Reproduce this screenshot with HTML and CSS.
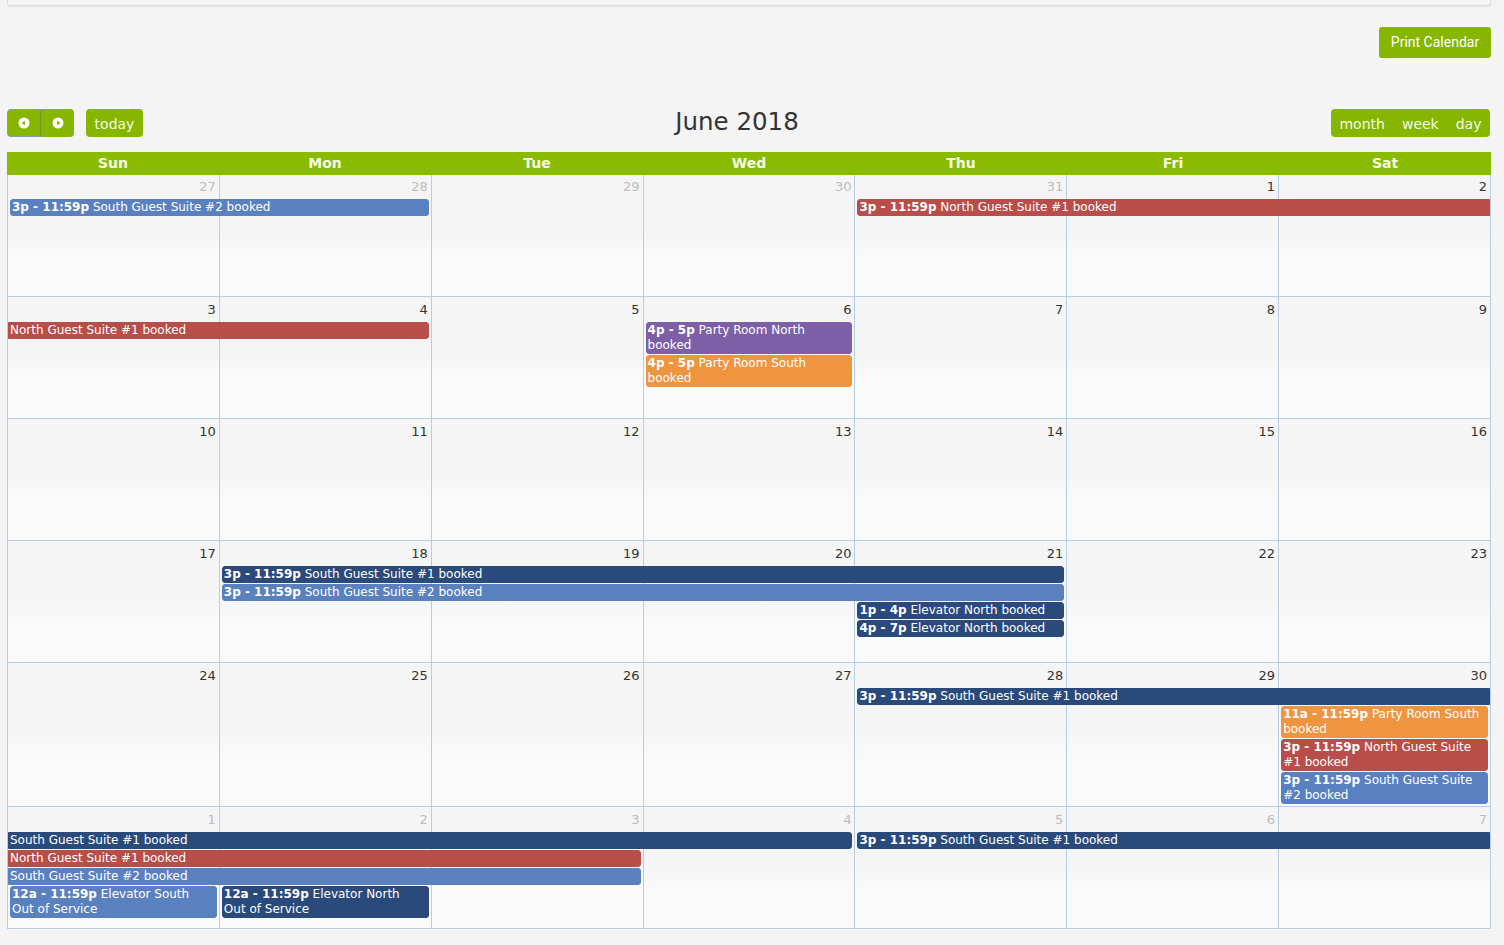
FILE: index.html
```html
<!DOCTYPE html>
<html>
<head>
<meta charset="utf-8">
<title>June 2018</title>
<link rel="stylesheet" href="styles.css">
</head>
<body>
<div class="top-panel"></div>
<div class="page">
  <div class="print-row"><button class="print-btn">Print Calendar</button></div>

  <div class="toolbar">
    <div class="tb-left">
      <div class="btn-group">
        <button class="btn btn-icon btn-focus" aria-label="prev">
          <svg width="12" height="12" viewBox="0 0 12 12"><circle cx="6" cy="6" r="5.5" fill="#fff"/><polygon points="3.6,6 6.9,3.6 6.9,8.4" fill="#86b600"/></svg>
        </button>
        <button class="btn btn-icon" aria-label="next">
          <svg width="12" height="12" viewBox="0 0 12 12"><circle cx="6" cy="6" r="5.5" fill="#fff"/><polygon points="8.4,6 5.1,3.6 5.1,8.4" fill="#86b600"/></svg>
        </button>
      </div>
      <button class="btn btn-today">today</button>
    </div>
    <div class="tb-center"><h2 class="title">June 2018</h2></div>
    <div class="tb-right">
      <div class="btn-group">
        <button class="btn">month</button><button class="btn">week</button><button class="btn">day</button>
      </div>
    </div>
  </div>

  <div class="cal">
    <div class="head">
      <div>Sun</div><div>Mon</div><div>Tue</div><div>Wed</div><div>Thu</div><div>Fri</div><div>Sat</div>
    </div>

    <!-- week 1 -->
    <div class="week first">
      <div class="bg c1"></div><div class="bg c2"></div><div class="bg c3"></div><div class="bg c4"></div><div class="bg c5"></div><div class="bg c6"></div><div class="bg c7"></div>
      <div class="num c1 other">27</div><div class="num c2 other">28</div><div class="num c3 other">29</div><div class="num c4 other">30</div><div class="num c5 other">31</div><div class="num c6">1</div><div class="num c7">2</div>
      <div class="ev blue c1 sp2 r2"><b>3p - 11:59p</b> South Guest Suite #2 booked</div>
      <div class="ev red c5 sp3 r2 cont-r"><b>3p - 11:59p</b> North Guest Suite #1 booked</div>
    </div>

    <!-- week 2 -->
    <div class="week">
      <div class="bg c1"></div><div class="bg c2"></div><div class="bg c3"></div><div class="bg c4"></div><div class="bg c5"></div><div class="bg c6"></div><div class="bg c7"></div>
      <div class="num c1">3</div><div class="num c2">4</div><div class="num c3">5</div><div class="num c4">6</div><div class="num c5">7</div><div class="num c6">8</div><div class="num c7">9</div>
      <div class="ev red c1 sp2 r2 cont-l">North Guest Suite #1 booked</div>
      <div class="ev purple c4 r2"><b>4p - 5p</b> Party Room North booked</div>
      <div class="ev orange c4 r3"><b>4p - 5p</b> Party Room South booked</div>
    </div>

    <!-- week 3 -->
    <div class="week">
      <div class="bg c1"></div><div class="bg c2"></div><div class="bg c3"></div><div class="bg c4"></div><div class="bg c5"></div><div class="bg c6"></div><div class="bg c7"></div>
      <div class="num c1">10</div><div class="num c2">11</div><div class="num c3">12</div><div class="num c4">13</div><div class="num c5">14</div><div class="num c6">15</div><div class="num c7">16</div>
    </div>

    <!-- week 4 -->
    <div class="week">
      <div class="bg c1"></div><div class="bg c2"></div><div class="bg c3"></div><div class="bg c4"></div><div class="bg c5"></div><div class="bg c6"></div><div class="bg c7"></div>
      <div class="num c1">17</div><div class="num c2">18</div><div class="num c3">19</div><div class="num c4">20</div><div class="num c5">21</div><div class="num c6">22</div><div class="num c7">23</div>
      <div class="ev navy c2 sp4 r2"><b>3p - 11:59p</b> South Guest Suite #1 booked</div>
      <div class="ev blue c2 sp4 r3"><b>3p - 11:59p</b> South Guest Suite #2 booked</div>
      <div class="ev navy c5 r4"><b>1p - 4p</b> Elevator North booked</div>
      <div class="ev navy c5 r5"><b>4p - 7p</b> Elevator North booked</div>
    </div>

    <!-- week 5 -->
    <div class="week">
      <div class="bg c1"></div><div class="bg c2"></div><div class="bg c3"></div><div class="bg c4"></div><div class="bg c5"></div><div class="bg c6"></div><div class="bg c7"></div>
      <div class="num c1">24</div><div class="num c2">25</div><div class="num c3">26</div><div class="num c4">27</div><div class="num c5">28</div><div class="num c6">29</div><div class="num c7">30</div>
      <div class="ev navy c5 sp3 r2 cont-r"><b>3p - 11:59p</b> South Guest Suite #1 booked</div>
      <div class="ev orange c7 r3"><b>11a - 11:59p</b> Party Room South booked</div>
      <div class="ev red c7 r4"><b>3p - 11:59p</b> North Guest Suite #1 booked</div>
      <div class="ev blue c7 r5"><b>3p - 11:59p</b> South Guest Suite #2 booked</div>
    </div>

    <!-- week 6 -->
    <div class="week">
      <div class="bg c1"></div><div class="bg c2"></div><div class="bg c3"></div><div class="bg c4"></div><div class="bg c5"></div><div class="bg c6"></div><div class="bg c7"></div>
      <div class="num c1 other">1</div><div class="num c2 other">2</div><div class="num c3 other">3</div><div class="num c4 other">4</div><div class="num c5 other">5</div><div class="num c6 other">6</div><div class="num c7 other">7</div>
      <div class="ev navy c1 sp4 r2 cont-l">South Guest Suite #1 booked</div>
      <div class="ev navy c5 sp3 r2 cont-r"><b>3p - 11:59p</b> South Guest Suite #1 booked</div>
      <div class="ev red c1 sp3 r3 cont-l">North Guest Suite #1 booked</div>
      <div class="ev blue c1 sp3 r4 cont-l">South Guest Suite #2 booked</div>
      <div class="ev blue c1 r5"><b>12a - 11:59p</b> Elevator South Out of Service</div>
      <div class="ev navy c2 r5"><b>12a - 11:59p</b> Elevator North Out of Service</div>
    </div>
  </div>
</div>
</body>
</html>
```

FILE: styles.css
```css
html, body {
  margin: 0;
  padding: 0;
}
body {
  background: #f4f4f4;
  font-family: "DejaVu Sans", Verdana, sans-serif;
  color: #333;
}
.top-panel {
  height: 5px;
  margin: 0 13px 0 7px;
  background: #f6f6f6;
  border: 1px solid #dcdcdc;
  border-top: 0;
  border-radius: 0 0 3px 3px;
  box-shadow: 0 1px 2px rgba(0,0,0,0.06);
}
.page {
  margin-left: 7px;
  width: 1484px;
}
.print-row {
  display: flex;
  justify-content: flex-end;
  margin-top: 21px;
}
.print-btn {
  height: 31px;
  width: 112px;
  padding: 0 0 2px;
  border: 0;
  border-radius: 3px;
  background: #86b600;
  color: #fff;
  font-family: Roboto, "Liberation Sans", sans-serif;
  font-size: 14px;
}
.toolbar {
  display: flex;
  align-items: center;
  margin-top: 51px;
  height: 28px;
}
.tb-left {
  display: flex;
  align-items: center;
  gap: 12px;
}
.tb-center {
  flex: 1;
  text-align: center;
}
.tb-right {
  display: flex;
  padding-right: 1px;
}
.title {
  margin: 0;
  font-size: 24.5px;
  font-weight: normal;
  color: #333;
  line-height: 24px;
  position: relative;
  top: -1px;
}
.btn-group {
  display: flex;
  border-radius: 4px;
  overflow: hidden;
}
.btn {
  height: 28px;
  border: 0;
  margin: 0;
  padding: 0 8.5px;
  background: #86b600;
  color: #f4fae6;
  font-family: "DejaVu Sans", Verdana, sans-serif;
  font-size: 14px;
  line-height: 30px;
}
.btn-icon {
  width: 34px;
  padding: 0;
  display: flex;
  align-items: center;
  justify-content: center;
}
.btn-icon + .btn-icon {
  width: 33px;
}
.btn-focus {
  border: 1px solid #7e9fb5;
  border-radius: 4px 0 0 4px;
  border-right-color: #6f9a2c;
}
.btn-today {
  border-radius: 4px;
  width: 57px;
  padding: 0;
}
.cal {
  margin-top: 15px;
}
.head {
  display: grid;
  grid-template-columns: repeat(7, 1fr);
  height: 23px;
  background: #89bb00;
  color: #f6fbe9;
  font-weight: bold;
  font-size: 14px;
  line-height: 22px;
  text-align: center;
}
.week {
  display: grid;
  grid-template-columns: repeat(7, 1fr);
  grid-template-rows: 25px repeat(4, auto) 1fr;
  min-height: 120px;
  padding-bottom: 1px;
  border-left: 1px solid #b5cee3;
  border-bottom: 1px solid #b5cee3;
}
.week.first {
  grid-template-rows: 24px repeat(4, auto) 1fr;
}
.bg {
  grid-row: 1 / -1;
  margin-bottom: -1px;
  border-right: 1px solid #b5cee3;
  background: linear-gradient(to bottom, #f5f5f5 0, #f5f5f5 48%, #fafafa 68%, #fafafa 100%);
}
.c1 { grid-column-start: 1; }
.c2 { grid-column-start: 2; }
.c3 { grid-column-start: 3; }
.c4 { grid-column-start: 4; }
.c5 { grid-column-start: 5; }
.c6 { grid-column-start: 6; }
.c7 { grid-column-start: 7; }
.sp2 { grid-column-end: span 2; }
.sp3 { grid-column-end: span 3; }
.sp4 { grid-column-end: span 4; }
.r2 { grid-row-start: 2; }
.r3 { grid-row-start: 3; }
.r4 { grid-row-start: 4; }
.r5 { grid-row-start: 5; }
.num {
  grid-row: 1;
  text-align: right;
  padding-right: 4px;
  font-size: 13px;
  line-height: 25px;
  color: #333;
}
.first .num {
  line-height: 24px;
}
.num.other {
  color: #bcbcbc;
}
.ev {
  align-self: start;
  margin: 0 3px 1px 2px;
  padding: 0 4px 0 1px;
  border: 1px solid;
  border-radius: 3px;
  font-size: 12px;
  line-height: 15px;
  color: #fff;
  overflow: hidden;
}
.ev b {
  font-weight: bold;
}
.ev.cont-l {
  margin-left: 0;
  border-top-left-radius: 0;
  border-bottom-left-radius: 0;
}
.ev.cont-r {
  margin-right: 1px;
  border-top-right-radius: 0;
  border-bottom-right-radius: 0;
}
.blue { background: #5a81bf; border-color: #5a81bf; }
.navy { background: #2a4a7c; border-color: #2a4a7c; }
.red { background: #b84d49; border-color: #b84d49; }
.purple { background: #7c5fa6; border-color: #7c5fa6; }
.orange { background: #ef943f; border-color: #ef943f; }
```
